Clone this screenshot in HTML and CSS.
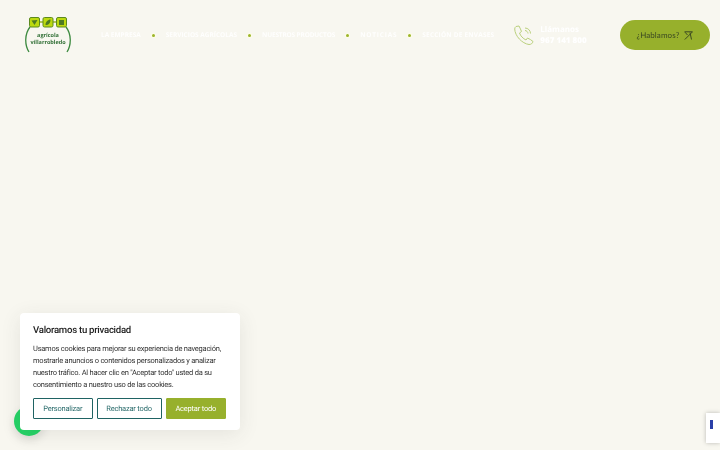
FILE: index.html
```html
<!DOCTYPE html>
<html lang="es">
<head>
<meta charset="utf-8">
<title>Agrícola Villarrobledo</title>
<link rel="stylesheet" href="styles.css">
</head>
<body>
<header class="header">
  <a class="logo" href="#">
    <svg class="logo-icons" width="46" height="38" viewBox="0 0 46 38" fill="none">
      <path d="M5 11C-.5 18 -.5 29 4 36M41 11C46.500 18 46.500 29 42 36" stroke="#3c8a3f" stroke-width="1.300"/>
      <path d="M9 6H37" stroke="#9ab52a" stroke-width="1.500"/>
      <rect x="4.500" y="1.500" width="10" height="9.500" rx="1.500" fill="#bcd90f" stroke="#5c8a1e"/>
      <rect x="18" y="1.500" width="10" height="9.500" rx="1.500" fill="#bcd90f" stroke="#5c8a1e"/>
      <rect x="31.500" y="1.500" width="10" height="9.500" rx="1.500" fill="#bcd90f" stroke="#5c8a1e"/>
      <path d="M6.500 4.500L12.500 4L9.500 9ZM20.500 9C20.500 5 24 3.500 25.500 3.500C25.500 7 24 9 20.500 9ZM34 4H39V9H34Z" fill="#4d7a22"/>
    </svg>
    <span class="logo-text">agrícola<br>villarrobledo</span>
  </a>
  <nav class="nav">
    <a href="#">LA EMPRESA</a><i class="dot"></i>
    <a href="#">SERVICIOS AGRÍCOLAS</a><i class="dot"></i>
    <a class="tight" href="#">NUESTROS PRODUCTOS</a><i class="dot"></i>
    <a class="wide" href="#">NOTICIAS</a><i class="dot"></i>
    <a class="wide-sm" href="#">SECCIÓN DE ENVASES</a>
  </nav>
  <div class="phone">
    <svg width="20" height="20" viewBox="0 0 20 20" fill="none" stroke="#b9cf7c" stroke-width="1">
      <path d="M2 1.500L5 1C6 3 7 5 7.500 6.500L5.500 8C6.500 11 9 13.500 12 15L13.500 13C15.500 14 17.500 15 19 16.500C18.500 18.500 17 19.500 15 19.500C8 18.500 1 11 .7 4C.7 3 1.200 2 2 1.500Z"/>
      <path d="M11 5.500C12.500 5.500 14 7 14 8.500M11 3C14 3 16.500 5.500 16.500 8.500"/>
    </svg>
    <div class="phone-text"><span>Llámanos</span><strong>967 141 800</strong></div>
  </div>
  <a class="cta" href="#">¿Hablamos?
    <svg width="9" height="9" viewBox="0 0 9 9" fill="none" stroke="#3c4a22" stroke-width="1">
      <path d="M.5 .8H8.500L.8 8.500M6 1.500L7.500 8.500M1 1.200L3.500 4"/>
    </svg>
  </a>
</header>

<div class="whatsapp"></div>

<aside class="cookie">
  <h2>Valoramos tu privacidad</h2>
  <p>Usamos cookies para mejorar su experiencia de navegación, mostrarle anuncios o contenidos personalizados y analizar nuestro tráfico. Al hacer clic en "Aceptar todo" usted da su consentimiento a nuestro uso de las cookies.</p>
  <div class="cookie-actions">
    <button class="btn btn-outline btn-custom">Personalizar</button>
    <button class="btn btn-outline btn-reject">Rechazar todo</button>
    <button class="btn btn-accept">Aceptar todo</button>
  </div>
</aside>

<div class="recaptcha"><span></span></div>
</body>
</html>
```

FILE: styles.css
```css
* { box-sizing: border-box; }
html, body { margin: 0; height: 450px; overflow: hidden; }
body {
  background: #f8f7f0;
  font-family: Roboto, "Liberation Sans", sans-serif;
  text-rendering: geometricPrecision;
  position: relative;
}
a { text-decoration: none; color: inherit; }

.header {
  display: flex;
  align-items: center;
  height: 70px;
  padding: 0 10px 0 25px;
  filter: blur(.3px);
}
.logo {
  position: relative;
  display: block;
  width: 46px;
  height: 38px;
  flex: none;
}
.logo-icons { display: block; }
.logo-text {
  position: absolute;
  left: 0;
  right: 0;
  top: 15.500px;
  text-align: center;
  font: 700 5.500px/7px "Open Sans", sans-serif;
  color: #2f6e34;
}
.nav {
  display: flex;
  align-items: center;
  margin-left: 30px;
  font: 700 6.500px/10px "Open Sans", sans-serif;
  color: #fff;
  white-space: nowrap;
}
.nav a { opacity: .9; }
.nav .tight { letter-spacing: -.15px; }
.nav .wide { letter-spacing: .8px; }
.nav .wide-sm { letter-spacing: .2px; }
.dot {
  display: block;
  width: 3px;
  height: 3px;
  margin: 0 11px;
  border-radius: 50%;
  background: #9db52a;
  box-shadow: 0 0 0 1px #fdfde6;
}
.phone {
  display: flex;
  align-items: center;
  gap: 6px;
  margin-left: 20px;
  color: #fff;
}
.phone svg { flex: none; }
.phone-text {
  display: flex;
  flex-direction: column;
  font: 700 8px/11px "Open Sans", sans-serif;
  white-space: nowrap;
}
.cta {
  display: flex;
  align-items: center;
  justify-content: center;
  gap: 5px;
  width: 90px;
  height: 30px;
  margin-left: auto;
  border-radius: 15px;
  background: #97b02c;
  color: #3c4a22;
  font: 400 8px/12px "Lato", sans-serif;
  letter-spacing: .1px;
}

.whatsapp {
  position: absolute;
  left: 14px;
  top: 406px;
  width: 30px;
  height: 30px;
  border-radius: 50%;
  background: #25d366;
  box-shadow: 0 4px 10px rgba(0, 0, 0, .12);
}

.cookie {
  position: absolute;
  left: 20px;
  top: 313px;
  width: 220px;
  height: 117px;
  padding: 11px 13px 0;
  background: #fff;
  border-radius: 4px;
  box-shadow: 0 4px 20px rgba(60, 60, 60, .1);
  filter: blur(.3px);
}
.cookie h2 {
  margin: 0 0 6px;
  font-size: 9.600px;
  line-height: 13px;
  letter-spacing: -.26px;
  font-weight: 500;
  color: #212121;
}
.cookie p {
  margin: 0;
  font-size: 7.500px;
  line-height: 12px;
  letter-spacing: -.23px;
  color: #333;
}
.cookie-actions {
  display: flex;
  gap: 4px;
  margin-top: 7px;
}
.btn {
  height: 21px;
  padding: 0;
  border: 1px solid #97b02c;
  border-radius: 1px;
  font: 400 7.500px/1 Roboto, sans-serif;
  letter-spacing: -.2px;
  text-rendering: geometricPrecision;
}
.btn-outline { background: #fff; border: 1.500px solid #1f6363; color: #2b6c6c; }
.btn-custom { width: 59.500px; }
.btn-reject { width: 65px; }
.btn-accept { width: 60.500px; background: #97b02c; color: #fff; }

.recaptcha {
  position: absolute;
  right: 0;
  top: 413px;
  width: 14px;
  height: 30px;
  background: #fff;
  box-shadow: 0 0 4px rgba(0, 0, 0, .25);
}
.recaptcha span {
  display: block;
  width: 3px;
  height: 9px;
  margin: 7px 0 0 4px;
  background: #2a3fa8;
}
```
